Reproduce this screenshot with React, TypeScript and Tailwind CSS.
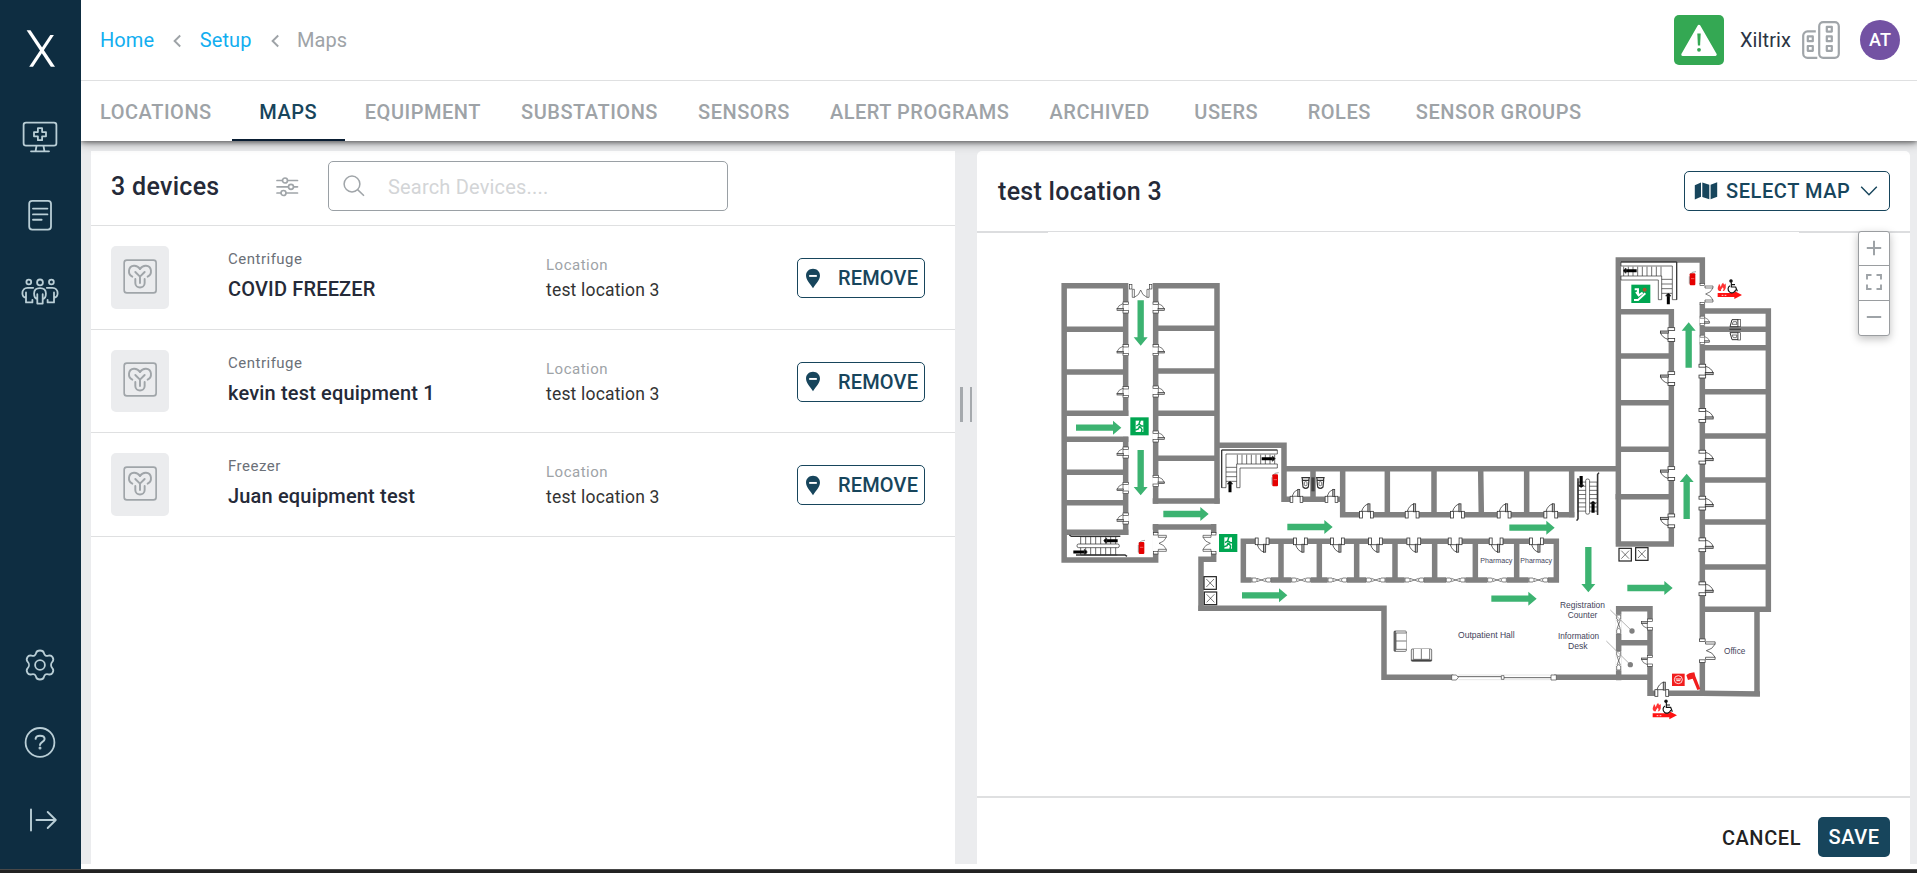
import type { ReactNode } from "react";

const tabs = [
  "LOCATIONS",
  "MAPS",
  "EQUIPMENT",
  "SUBSTATIONS",
  "SENSORS",
  "ALERT PROGRAMS",
  "ARCHIVED",
  "USERS",
  "ROLES",
  "SENSOR GROUPS",
];

const devices = [
  { type: "Centrifuge", name: "COVID FREEZER", location: "test location 3" },
  { type: "Centrifuge", name: "kevin test equipment 1", location: "test location 3" },
  { type: "Freezer", name: "Juan equipment test", location: "test location 3" },
];

/* ---------- icons ---------- */

function SideIcon({ children }: { children: ReactNode }) {
  return (
    <svg
      viewBox="0 0 40 40"
      className="h-10 w-10"
      fill="none"
      stroke="#b9ced6"
      strokeWidth="1.8"
      strokeLinecap="round"
      strokeLinejoin="round"
    >
      {children}
    </svg>
  );
}

function MonitorIcon() {
  return (
    <SideIcon>
      <rect x="3.6" y="5.6" width="32.8" height="23" rx="2.4" />
      <path d="M16.5 28.8 15.6 34M23.5 28.8l.9 5.2M11 34.300h18" />
      <path d="M17.900 11.200h4.200v3.900h3.900v4.200h-3.900v3.900h-4.200v-3.900H14v-4.200h3.900z" />
    </SideIcon>
  );
}

function DocIcon() {
  return (
    <SideIcon>
      <rect x="9.200" y="5.800" width="21.800" height="28.800" rx="3" />
      <path d="M13 13.600h14.400M13 19.400h14.400M13 24.800h8.600" strokeWidth="1.900" />
    </SideIcon>
  );
}

function PeopleIcon() {
  return (
    <SideIcon>
      <g transform="translate(0 2)">
        <circle cx="20" cy="7.400" r="2.900" />
        <circle cx="8.800" cy="7" r="2.400" />
        <circle cx="31.400" cy="7" r="2.400" />
        <path d="M17.300 28.600V24c-1.900-.4-3.200-3-3.200-5.600 0-3.200 2.200-5.200 5.900-5.200s5.900 2 5.900 5.200c0 2.600-1.300 5.200-3.200 5.600v4.600zM17.300 24v-4.800M22.700 24v-4.800" />
        <path d="M13.200 12.800H7.500c-3 0-5.100 2.200-5.100 5.400 0 2.200 1.200 4.200 3.600 4.600v4.600h6.400v-2.600M6 22.800v-5.400" />
        <path d="M26.800 12.800h5.700c3 0 5.100 2.200 5.100 5.400 0 2.200-1.200 4.200-3.600 4.600v4.600h-6.400v-2.600M34 22.800v-5.400" />
      </g>
    </SideIcon>
  );
}

function GearIcon() {
  return (
    <SideIcon>
      <circle cx="20" cy="20" r="4.900" />
      <path d="M20 5.500c2.400 0 3.500.8 3.900 2.500.6 2.400 2 3.400 4.500 2.700 1.900-.5 3.200-.2 4.200 1.600 1.200 2.100 1 3.300-.3 4.600-1.700 1.700-1.700 4.500 0 6.200 1.300 1.300 1.500 2.500.3 4.600-1 1.800-2.300 2.100-4.200 1.600-2.500-.7-3.900.3-4.500 2.700-.4 1.700-1.500 2.500-3.900 2.500s-3.500-.8-3.900-2.500c-.6-2.400-2-3.400-4.500-2.700-1.900.5-3.200.2-4.200-1.600-1.200-2.100-1-3.300.3-4.600 1.700-1.700 1.700-4.500 0-6.200-1.300-1.300-1.500-2.500-.3-4.600 1-1.800 2.300-2.100 4.200-1.600 2.500.7 3.900-.3 4.500-2.700.4-1.700 1.500-2.500 3.900-2.500z" />
    </SideIcon>
  );
}

function HelpIcon() {
  return (
    <SideIcon>
      <g transform="translate(0 -.6)">
        <circle cx="20" cy="20" r="14.400" />
        <path d="M15.600 16.400c.2-2 1.800-3 4.400-3s4.600 1.200 4.600 3.300c0 3-4.600 2.600-4.600 6" strokeWidth="2" />
        <circle cx="20" cy="25.700" r=".6" fill="#b9ced6" />
      </g>
    </SideIcon>
  );
}

function ExpandIcon() {
  return (
    <SideIcon>
      <path d="M11 9.500v21M16.400 20h19.400M27.700 12l8.100 8-8.100 8" strokeWidth="1.900" />
    </SideIcon>
  );
}

function XLogo() {
  return (
    <svg viewBox="0 0 30 40" className="h-10 w-[30px]" fill="#fff">
      <path d="M.6 1.200h3.900L29 37.800h-4.200z" />
      <path d="M24.300 6h3.600L7 37.800H3.200z" />
    </svg>
  );
}

function CentrifugeIcon() {
  return (
    <svg
      viewBox="370 778 103 105"
      className="h-[35px] w-[34.300px]"
      fill="none"
      stroke="#a0a5a9"
      strokeWidth="5.800"
      strokeLinecap="round"
      strokeLinejoin="round"
    >
      <rect x="373.500" y="781.500" width="96" height="98" rx="8" strokeWidth="5" />
      <path d="M421 850v-19l-14-14M421 831l14-14" />
      <path d="M398 831c-15-7-13-32 5-33 8-.5 14 4 18 10" />
      <path d="M444 831c15-7 13-32-5-33-8-.5-14 4-18 10" />
      <path d="M407 838v12c0 18 28 18 28 0v-12" />
    </svg>
  );
}

function PinMinusIcon() {
  return (
    <svg viewBox="0 0 16 22" className="h-[21px] w-4" fill="#17455c">
      <path d="M8 .8c4.200 0 7.300 3 7.300 7 0 4.400-3.600 7.600-7.300 13.400C4.300 15.400.7 12.200.7 7.800c0-4 3.100-7 7.300-7z" />
      <rect x="4" y="7.300" width="8" height="2" fill="#fff" />
    </svg>
  );
}

function BuildingIcon() {
  return (
    <svg viewBox="0 0 40 40" className="h-10 w-10" fill="none" stroke="#a0a5a9" strokeWidth="2.200">
      <rect x="18.200" y="2.200" width="19.600" height="35.600" rx="4" />
      <path d="M14.800 11.400H6.500A4.300 4.300 0 0 0 2.200 15.700v17.800a4.300 4.300 0 0 0 4.300 4.300h9.800" />
      <path d="M25.800 6.800h5v4.800h-5zM25.800 16.400h5v4.800h-5zM25.800 26h5v4.800h-5zM6.800 16.400h5v4.800h-5zM6.800 26h5v4.800h-5z" strokeLinejoin="round" />
    </svg>
  );
}

function Chevron() {
  return (
    <svg viewBox="0 0 8 14" className="mt-px h-3.5 w-2" fill="none" stroke="#9ea3a7" strokeWidth="1.900">
      <path d="M7.200 1.500 1.600 7l5.600 5.500" />
    </svg>
  );
}

/* ---------- floor plan ---------- */

const K = 1 / 3;

type Dir = "left" | "right" | "up" | "down";

const turn: Record<Dir, number> = { right: 0, down: 90, left: 180, up: 270 };

function Arrow({ x, y, dir }: { x: number; y: number; dir: Dir }) {
  return (
    <path
      transform={`translate(${x} ${y}) rotate(${turn[dir]})`}
      d="M0-9.500h111V-21l25 21-25 21V9.500H0z"
      fill="#3cb371"
    />
  );
}

/* The leaf swings to the left of a vertical wall when t is empty. */
function Door({ x, y, t = "" }: { x: number; y: number; t?: string }) {
  return (
    <g transform={`translate(${x} ${y}) ${t}`} stroke="#333" strokeWidth="1.900" fill="#fff">
      <rect x="-9" y="-16" width="18" height="32" stroke="none" />
      <rect x="-8" y="-17" width="16" height="7" />
      <rect x="-8" y="9" width="16" height="7" />
      <path d="M-8-12Q-22-8-26 4H-8z" />
      <rect x="-26" y="3" width="19" height="5" fill="#bbb" />
    </g>
  );
}

/* Leaves open to the right of a vertical wall when t is empty. */
function DoubleDoor({ x, y, t = "" }: { x: number; y: number; t?: string }) {
  return (
    <g transform={`translate(${x} ${y}) ${t}`} stroke="#333" strokeWidth="1.900" fill="#fff">
      <rect x="-10" y="-30" width="20" height="60" stroke="none" />
      <rect x="-7" y="-32" width="14" height="7" />
      <rect x="-7" y="25" width="14" height="7" />
      <path d="M8-24h24v6H8zM8 18h24v6H8zM32-18Q26-4 10 0 26 4 32 18" />
    </g>
  );
}

function Win({ x, y, vertical = false }: { x: number; y: number; vertical?: boolean }) {
  return (
    <g transform={`translate(${x} ${y})${vertical ? " rotate(90)" : ""}`} fill="#fff" stroke="#444" strokeWidth="2">
      <rect x="-29" y="-9" width="58" height="18" stroke="none" />
      <path d="M-13-5 13 5M-13 5 13-5" />
      <path d="M-28-6h12l4 6-4 6h-12zM28-6H16l-4 6 4 6h12z" />
    </g>
  );
}

function Lift({ x, y }: { x: number; y: number }) {
  return (
    <g transform={`translate(${x} ${y})`} fill="#fff" stroke="#222" strokeWidth="3.600">
      <rect x="0" y="0" width="37" height="38" />
      <path d="M7 7 30 31M30 7 7 31" strokeWidth="1.800" />
    </g>
  );
}

function Extinguisher({ x, y }: { x: number; y: number }) {
  return (
    <g transform={`translate(${x} ${y})`}>
      <rect x="-8" y="-15" width="17" height="36" rx="3" fill="#e50000" />
      <path d="M-6-12q3-8 17-8M-9-6v22" stroke="#666" strokeWidth="1.800" fill="none" />
      <path d="M-4 1H6" stroke="#ff8a8a" strokeWidth="2" />
    </g>
  );
}

function ExitSign({ x, y }: { x: number; y: number }) {
  return (
    <g transform={`translate(${x} ${y})`}>
      <rect width="55" height="54" fill="#00a651" />
      <path d="M16 10h23v34H16z" fill="#fff" />
      <path d="m30 8-4 12 8 6 6 0M27 20l-9 6M28 26l-4 9-9 3M29 28l6 8-2 10" stroke="#00a651" strokeWidth="4.500" fill="none" />
    </g>
  );
}

function FireExit({ x, y }: { x: number; y: number }) {
  return (
    <g transform={`translate(${x} ${y})`}>
      <path d="M0 40h50v-6l23 12-23 12v-6H0z" fill="#f11" />
      <path d="M4 34C-4 26 3 20 4 12c4 4 4 7 5 10 3-6 2-10 8-13 0 5 5 8 7 2 0 8 3 16-5 23h-4c4-5 3-8 0-11-2 4-6 6-5 11z" fill="#f33" />
      <path d="M12 47h18" stroke="#fff" strokeWidth="2.500" strokeDasharray="5 4" />
      <g fill="none" stroke="#111" strokeWidth="3.500">
        <circle cx="40" cy="4" r="3.500" fill="#111" />
        <path d="M41 8v14h13l5 13M41 15h11M37 18a11.500 11.500 0 1 0 17 12" />
      </g>
    </g>
  );
}

function Stairs({ x, y, flip = false }: { x: number; y: number; flip?: boolean }) {
  return (
    <g transform={`translate(${x} ${y})${flip ? " scale(-1 1)" : ""}`} fill="#fff" stroke="#333" strokeWidth="2.100">
      <path d="M47 14v30M61 14v30M75 14v30M89 14v30M103 14v30M117 14v30M131 14v30M145 14v30M159 14v30M13 52h34M13 66h34M13 80h34M13 94h34" />
      <path d="M0 0h167v12H13v101H0z" />
      <path d="M45 42h122v12H55v59H45z" />
      <path d="M0 0h167M0 0v113" strokeWidth="3.500" />
      <path d="M120 26h36M25 127V96" stroke="#000" strokeWidth="9" />
      <path d="M152 18l9 8-9 8zM17 102l8-9 8 9z" fill="#000" />
    </g>
  );
}

function Escalator({ x, y, t = "" }: { x: number; y: number; t?: string }) {
  return (
    <g transform={`translate(${x} ${y}) ${t}`} stroke="#333" strokeWidth="2.200" fill="#fff">
      <path d="M34 5v55M49 5v55M64 5v55M79 5v55M94 5v55M109 5v55M124 5v55M139 5v55M34 5h110M34 60h110" />
      <rect x="23" y="27" width="127" height="11" rx="5" />
      <path d="M0 0 6 4h147M173 64l-6-4H20" strokeWidth="4.500" fill="none" />
      <path d="M105 17h40M12 51h40" stroke="#000" strokeWidth="9" />
      <path d="m112 9-9 8 9 8zM45 43l9 8-9 8z" fill="#000" />
    </g>
  );
}

function Toilet({ x, y }: { x: number; y: number }) {
  return (
    <g transform={`translate(${x} ${y})`} fill="#fff" stroke="#333" strokeWidth="3.600">
      <path d="M-11-17h22l-2 8H-9zM-10-9H10l-2 20q-8 8-16 0z" />
      <rect x="-4" y="-5" width="8" height="12" rx="3" strokeWidth="2" />
    </g>
  );
}

/* Toilet seen from the side, with its tank towards the right. */
function SideToilet({ y, mirror = false }: { y: number; mirror?: boolean }) {
  return (
    <g transform={`translate(525 ${y})${mirror ? " scale(1 -1)" : ""}`} fill="#fff" stroke="#333" strokeWidth="3">
      <path d="M-15 11-9-10H9l1 21z" />
      <path d="M-9 4-5-4H4l2 8z" strokeWidth="2" />
      <rect x="9" y="-11" width="7" height="22" strokeWidth="2" />
    </g>
  );
}

function Sofa({ x, y, t = "" }: { x: number; y: number; t?: string }) {
  return (
    <g transform={`translate(${x} ${y}) ${t}`} fill="#fff" stroke="#444" strokeWidth="2.200">
      <rect x="0" y="0" width="61" height="37" rx="3" />
      <path d="M6 0v31h49V0M30 0v31" />
      <path d="M0 34h61" strokeWidth="4.500" />
    </g>
  );
}

function Label({ x, y, w, size = 27, children }: { x: number; y: number; w: number; size?: number; children: string }) {
  return (
    <text
      x={x}
      y={y}
      fontSize={size}
      textLength={w}
      lengthAdjust="spacingAndGlyphs"
      className="fill-[#44445a] [font-family:'Liberation_Sans',Arial,sans-serif]"
    >
      {children}
    </text>
  );
}

const up = "rotate(90) scale(1.250 -1.250)";
const down = "rotate(-90) scale(1.250)";

function FloorPlan() {
  return (
    <svg viewBox="977 232 933 564" className="block h-[564px] w-[933px]">
      {/* walls */}
      <g fill="none" stroke="#808080" strokeWidth="16.500">
        <g transform={`translate(1040 240) scale(${K})`}>
          <path d="M265 137.500H72.500V960H347V852M338 137.500H531V791M257 137V528M257 590V885M347 137V791" />
          <path d="M72 268H257M72 396H257M72 520H265M72 598H265M72 697H257M72 788H257M72 877H265" />
          <path d="M347 265H531M347 393H531M347 520H531M347 655H531M338 783H539" />
          <path d="M338 861H529M521 852V958H483V1113" />
        </g>
        <g transform={`translate(1200 420) scale(${K})`}>
          <path d="M50 76H252V238H428M252 146H1262M339 146V238M428 146V284H1123" />
          <path d="M562 146V284M702 146V284M842 146 844 284M980 146V284M1115 146V292" />
          <path d="M130 364H1069V480H130zM243 364V480M358 364V480M470 364V480M585 364V480M704 364V480M826 364V480M950 364V480" />
          <path d="M-5 565H552V772H760M1062 772H1345" />
        </g>
        <g transform={`translate(1560 240) scale(${K})`}>
          <path d="M175 912V60H427V1360M175 215H342M334 207V912M175 348H334M175 488H334M175 628H334M166 770H334M167 912H342" />
          <path d="M427 213H625V1108H427M427 268H625M427 323H625M427 455H625M427 588H625M427 720H625M427 846H625M427 981H625" />
        </g>
        <g transform={`translate(1540 460) scale(${K})`}>
          <path d="M236 661V446H330V700H487L660 702M236 548H330M651 448V702" />
        </g>
      </g>

      {/* west wing */}
      <g transform={`translate(1040 240) scale(${K})`}>
        {[203, 331, 457, 638, 744, 836].map((y) => (
          <Door key={y} x={257} y={y} />
        ))}
        {[203, 331, 455, 590, 723].map((y) => (
          <Door key={y} x={347} y={y} t="scale(-1 1)" />
        ))}
        <DoubleDoor x={302} y={140} t="rotate(90) scale(1 1.050)" />
        <DoubleDoor x={347} y={910} />
        <DoubleDoor x={521} y={910} t="scale(-1 1)" />
        <Stairs x={545} y={630} />
        <Escalator x={88} y={885} />
        <Extinguisher x={304} y={921} />
        <Extinguisher x={705} y={718} />
        <ExitSign x={271} y={532} />
        <ExitSign x={537} y={882} />
        <Lift x={492} y={1010} />
        <Lift x={493} y={1056} />
        <Arrow x={302} y={181} dir="down" />
        <Arrow x={302} y={630} dir="down" />
        <Arrow x={108} y={563} dir="right" />
        <Arrow x={370} y={822} dir="right" />
        <Arrow x={742} y={861} dir="right" />
        <Arrow x={606} y={1066} dir="right" />
      </g>

      {/* central block */}
      <g transform={`translate(1200 420) scale(${K})`}>
        <path d="M339 172v42" stroke="#444" strokeWidth="10" />
        <Toilet x={317} y={190} />
        <Toilet x={361} y={190} />
        {[290, 395].map((x) => (
          <Door key={x} x={x} y={238} t="rotate(90) scale(1.150 -1.150)" />
        ))}
        {[500, 637, 773, 913, 1053].map((x) => (
          <Door key={x} x={x} y={284} t={up} />
        ))}
        {[187, 302, 413, 527, 642, 766, 889, 1010].map((x) => (
          <Door key={x} x={x} y={364} t={down} />
        ))}
        {[184, 303, 412, 527, 643, 767, 891, 1015].map((x) => (
          <Win key={x} x={x} y={480} />
        ))}
        <g fill="#fff" stroke="#444" strokeWidth="2">
          <path d="M770 770H905M905 773H1055" strokeWidth="2.500" />
          <path d="M775 765H1060M775 779H1060" stroke="#ccc" strokeWidth="1.500" />
          <path d="M755 765h14l6 7-6 8h-14zM904 767h8v11h-8zM1053 765h16v15h-16z" />
        </g>
        <Sofa x={619} y={633} t="rotate(90)" />
        <Sofa x={634} y={687} />
        <Arrow x={928} y={323} dir="right" />
        <Arrow x={874} y={536} dir="right" />
        <Label x={841} y={430} w={96} size={22}>Pharmacy</Label>
        <Label x={961} y={430} w={95} size={22}>Pharmacy</Label>
        <Label x={774} y={654} w={170}>Outpatient Hall</Label>
      </g>

      {/* east wing */}
      <g transform={`translate(1560 240) scale(${K})`}>
        <Stairs x={350} y={66} flip />
        <Extinguisher x={397} y={115} />
        <g transform="translate(214 134)">
          <rect width="57" height="55" fill="#00a651" />
          <path d="M8 46h12l22-20M10 14h10v18M14 22l8 10 12-8" fill="none" stroke="#fff" strokeWidth="6" />
          <circle cx="40" cy="15" r="6" fill="#a5552c" />
        </g>
        {[283, 415, 700, 842].map((y) => (
          <Door key={y} x={334} y={y} t="scale(1.250 -1.250)" />
        ))}
        {[243, 300].map((y) => (
          <Door key={y} x={427} y={y} t="scale(-.850 .850)" />
        ))}
        {[394, 527, 652, 790, 915, 1047].map((y) => (
          <Door key={y} x={427} y={y} t="scale(-1.250 1.250)" />
        ))}
        <DoubleDoor x={427} y={162} />
        <DoubleDoor x={427} y={1232} t="scale(1.200 1.100)" />
        <path d="M508 268h35" stroke="#444" strokeWidth="4" />
        <SideToilet y={249} />
        <SideToilet y={289} mirror />
        <FireExit x={473} y={119} />
        <Arrow x={386} y={383} dir="up" />
      </g>

      {/* south-east rooms */}
      <g transform={`translate(1540 460) scale(${K})`}>
        <Escalator x={177} y={38} t="rotate(90) scale(.830 1.050)" />
        <Lift x={237} y={265} />
        <Lift x={287} y={263} />
        <Arrow x={440} y={177} dir="up" />
        <Arrow x={145} y={261} dir="down" />
        <Arrow x={262} y={384} dir="right" />
        <Win x={236} y={493} vertical />
        <Win x={236} y={602} vertical />
        {[493, 602].map((y) => (
          <Door key={y} x={330} y={y} t="scale(1 -1)" />
        ))}
        <Door x={366} y={699} t={up} />
        <path d="M211 450 276 513M199 543 271 614" stroke="#999" strokeWidth="2.200" />
        <circle cx="276" cy="513" r="8" fill="#808080" />
        <circle cx="271" cy="614" r="8" fill="#808080" />
        <g transform="translate(396 641)">
          <rect width="38" height="37" fill="#f11d1d" />
          <circle cx="19" cy="18" r="12" fill="none" stroke="#fff" strokeWidth="2.500" />
          <path d="M11 16h16M13 21h12" stroke="#fff" strokeWidth="3" />
        </g>
        <path d="M439 646q6-7 24-9l3 12 15 38-9 3-14-34-14 4z" fill="#f11d1d" />
        <FireExit x={338} y={720} />
        <Label x={60} y={444} w={135}>Registration</Label>
        <Label x={83} y={475} w={89}>Counter</Label>
        <Label x={54} y={536} w={123}>Information</Label>
        <Label x={84} y={567} w={59}>Desk</Label>
        <Label x={552} y={582} w={64}>Office</Label>
      </g>
    </svg>
  );
}

/* ---------- page ---------- */

function Sidebar() {
  return (
    <nav className="flex w-[81px] shrink-0 flex-col items-center bg-[#0e2d41] pr-px">
      <div className="mt-[29px] ml-px flex">
        <XLogo />
      </div>
      <div className="mt-12 flex flex-col items-center gap-[38px]">
        <MonitorIcon />
        <DocIcon />
        <PeopleIcon />
      </div>
      <div className="mt-auto mb-[29px] flex flex-col items-center gap-[37.500px]">
        <GearIcon />
        <HelpIcon />
        <ExpandIcon />
      </div>
    </nav>
  );
}

function Header() {
  return (
    <header className="flex h-[81px] shrink-0 items-center border-b border-[#dfe0e1] bg-white pr-[17px] pl-[19px] text-xl">
      <div className="flex items-center tracking-[0.005em]">
        <span className="text-[#12aef0]">Home</span>
        <span className="mr-[18.500px] ml-[19px]">
          <Chevron />
        </span>
        <span className="text-[#12aef0]">Setup</span>
        <span className="mr-[18.500px] ml-[19px]">
          <Chevron />
        </span>
        <span className="text-[#9ea3a7]">Maps</span>
      </div>
      <div className="ml-auto flex items-center">
        <div className="flex h-[50px] w-[50px] items-center justify-center rounded-[5px] bg-[#34a853]">
          <svg viewBox="0 0 36 32" className="h-8 w-9">
            <path d="M18 2.200 34.200 30.400H1.800z" fill="#fff" stroke="#fff" strokeWidth="3" strokeLinejoin="round" />
            <path d="M16.300 9.500h3.400l-.6 12h-2.200z" fill="#34a853" />
            <circle cx="18" cy="25.800" r="1.900" fill="#34a853" />
          </svg>
        </div>
        <span className="ml-4 text-xl tracking-[0.005em] text-[#2b3444]">Xiltrix</span>
        <span className="ml-2.5">
          <BuildingIcon />
        </span>
        <span className="ml-[19px] flex h-10 w-10 items-center justify-center rounded-full bg-[#7352a3] text-lg font-medium text-white">
          AT
        </span>
      </div>
    </header>
  );
}

function Tabs() {
  return (
    <div className="relative z-10 flex h-[60px] shrink-0 bg-white shadow-[0_2px_10px_rgba(0,0,0,0.35),0_1px_5px_rgba(0,0,0,0.5)] [clip-path:inset(0_0_-20px_0)]">
      {tabs.map((tab) => (
        <div
          key={tab}
          className={
            tab === "MAPS"
              ? "flex min-w-[113px] items-center justify-center border-b-2 border-[#0a1e33] px-5 pt-[3px] text-xl font-medium tracking-[0.0265em] text-[#17455c]"
              : "flex min-w-[113px] items-center justify-center px-5 pt-px text-xl font-medium tracking-[0.0265em] text-[#9ea3a7] first:pl-[19px]"
          }
        >
          {tab}
        </div>
      ))}
    </div>
  );
}

function DevicePanel() {
  return (
    <section className="flex w-[864px] shrink-0 flex-col bg-white">
      <div className="flex h-[75px] shrink-0 border-b border-[#dfe0e1] pt-2.5 pl-5">
        <h2 className="mt-2 w-[164px] text-[25px] leading-[36px] font-medium tracking-[0.012em] text-[#252a38]">
          3 devices
        </h2>
        <svg viewBox="0 0 24 24" className="mt-[14px] h-6 w-6" fill="#fff" stroke="#a0a5a9" strokeWidth="1.700">
          <path d="M2 5.500h20.500M2 11.800h20.500M2 18h20.500" strokeLinecap="round" />
          <circle cx="10" cy="5.500" r="2.500" />
          <circle cx="16" cy="11.800" r="2.500" />
          <circle cx="8.500" cy="18" r="2.500" />
        </svg>
        <div className="ml-[29px] flex h-[50px] w-[400px] items-center rounded-[5px] border border-[#9aa0a5] pl-3.5">
          <svg viewBox="0 0 22 22" className="-mt-px h-[22px] w-[22px]" fill="none" stroke="#a0a5a9" strokeWidth="1.500">
            <circle cx="9" cy="9" r="7.900" />
            <path d="m14.600 14.600 6.400 6.200" />
          </svg>
          <span className="mt-0.5 ml-[23px] text-xl tracking-[0.00938em] text-[#d3d5d7]">Search Devices....</span>
        </div>
      </div>
      {devices.map((device) => (
        <div key={device.name} className="flex h-[103.500px] shrink-0 items-center border-b border-[#dfe0e1] pr-[30px] pl-5">
          <div className="flex h-[62.500px] w-[58px] items-center justify-center rounded-[5px] bg-[#ebecee] pb-0.5">
            <CentrifugeIcon />
          </div>
          <div className="-mt-[3px] ml-[59px] w-[318px]">
            <div className="text-[15px] leading-[25px] tracking-[0.03333em] text-[#6b7078]">{device.type}</div>
            <div className="mt-0.5 text-[20px] leading-[30px] font-medium tracking-[0.0085em] text-[#252a38]">
              {device.name}
            </div>
          </div>
          <div className="mt-0.5">
            <div className="text-[15px] leading-[25px] tracking-[0.03333em] text-[#9ea3a7]">Location</div>
            <div className="text-[17.500px] leading-[25px] tracking-[0.01071em] text-[#333]">{device.location}</div>
          </div>
          <button className="mt-0.5 ml-auto flex h-10 w-32 items-center rounded-[5px] border border-[#17455c] pl-[7px] text-xl font-medium tracking-[0.008em] text-[#17455c]">
            <PinMinusIcon />
            <span className="ml-[17px]">REMOVE</span>
          </button>
        </div>
      ))}
    </section>
  );
}

function MapPanel() {
  return (
    <section className="relative flex w-[933px] shrink-0 flex-col rounded-t-[5px] bg-white">
      <div className="flex h-[81px] shrink-0 items-start justify-between border-b border-[#dcdddf] pt-5 pr-5 pl-[21px]">
        <h2 className="mt-[3px] text-[25px] leading-[36px] font-medium tracking-[0.012em] text-[#252a38]">test location 3</h2>
        <button className="flex h-10 w-[206px] items-center rounded-[5px] border border-[#17455c] pl-[9px] text-xl font-medium tracking-[0.02857em] text-[#17455c]">
          <svg viewBox="0 0 24 20" className="h-5 w-6" fill="#17455c">
            <path d="M.8 4.200 7 1.500v14.300L.8 18.500zM8.300 1.500l7 2.300v14.400l-7-2.300zM16.600 3.800l6.600-2.500v14.400l-6.600 2.500z" />
          </svg>
          <span className="ml-2">SELECT MAP</span>
          <svg viewBox="0 0 18 12" className="ml-2.5 h-3 w-[18px]" fill="none" stroke="#17455c" strokeWidth="1.400">
            <path d="m1.200 1.800 7.800 8 7.800-8" />
          </svg>
        </button>
      </div>
      <div className="flex h-px shrink-0 justify-between">
        <span className="w-[71px] bg-[#dcdddf]" />
        <span className="w-[111px] bg-[#dcdddf]" />
      </div>
      <div className="-mt-px h-[564px] shrink-0">
        <FloorPlan />
      </div>
      <div className="absolute top-20 right-5 flex h-[105px] w-8 flex-col divide-y divide-[#9a9da0] rounded-[3px] border border-[#9a9da0] bg-white text-[#9ea3a7] shadow-[0_3px_8px_rgba(0,0,0,0.25)]">
        <span className="flex flex-1 items-center justify-center pb-px">
          <svg viewBox="0 0 16 16" className="h-4 w-4" stroke="currentColor" strokeWidth="2">
            <path d="M8 .8v14.400M.8 8h14.400" />
          </svg>
        </span>
        <span className="flex flex-1 items-center justify-center pb-0.5">
          <svg viewBox="0 0 16 16" className="h-4 w-4" fill="none" stroke="currentColor" strokeWidth="1.900">
            <path d="M1 5.500V1h4.500M10.500 1H15v4.500M15 10.500V15h-4.500M5.500 15H1v-4.500" />
          </svg>
        </span>
        <span className="flex flex-1 items-center justify-center pb-0.5">
          <svg viewBox="0 0 16 16" className="h-4 w-4" stroke="currentColor" strokeWidth="2">
            <path d="M.8 8h14.400" />
          </svg>
        </span>
      </div>
      <div className="flex flex-1 items-start justify-end border-t-2 border-[#dfe0e1] pt-[19px] pr-5 text-xl font-medium">
        <button className="mr-[17px] flex h-[41px] items-center tracking-[0.02857em] text-[#222]">CANCEL</button>
        <button className="flex h-10 w-[72px] items-center justify-center rounded-[5px] bg-[#17455c] tracking-[0.02857em] text-white">
          SAVE
        </button>
      </div>
    </section>
  );
}

export default function App() {
  return (
    <div className="flex h-[873px] w-[1917px] flex-col overflow-hidden bg-white [font-family:Roboto,'Noto_Sans',sans-serif]">
      <div className="flex h-[869px] shrink-0">
        <Sidebar />
        <div className="flex min-w-0 flex-1 flex-col">
          <Header />
          <Tabs />
          <main className="flex h-[723px] shrink-0 bg-[#ebecee] pt-2.5 pl-2.5">
            <DevicePanel />
            <div className="flex w-[22px] shrink-0 items-start justify-center gap-[7px] pt-[236px]">
              <span className="h-[35px] w-[2.500px] bg-[#a5a9ad]" />
              <span className="h-[35px] w-[2.500px] bg-[#a5a9ad]" />
            </div>
            <MapPanel />
          </main>
        </div>
      </div>
      <div className="h-1 shrink-0 border-t border-[#484848] bg-[#222]" />
    </div>
  );
}
